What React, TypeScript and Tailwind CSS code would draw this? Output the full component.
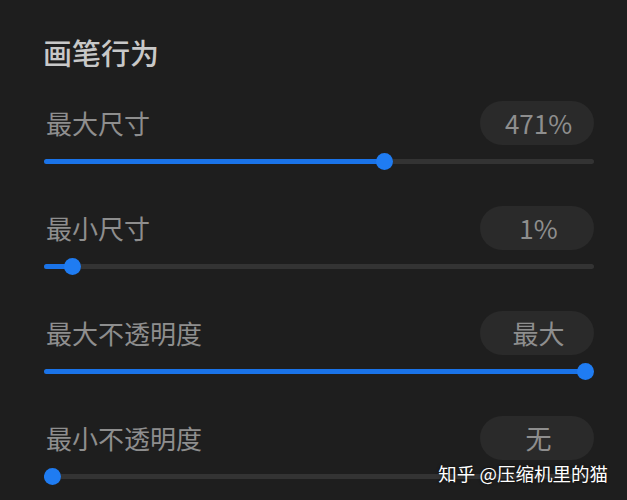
import React from 'react';

interface SliderRow {
  label: string;
  value: string;
  pct: number;
}

const rows: SliderRow[] = [
  { label: '最大尺寸', value: '471%', pct: 62.2 },
  { label: '最小尺寸', value: '1%', pct: 3.8 },
  { label: '最大不透明度', value: '最大', pct: 100 },
  { label: '最小不透明度', value: '无', pct: 0 },
];

const Slider = ({ pct }: { pct: number }) => (
  <div className="relative h-[17px] flex items-center">
    <div className="w-full h-[5px] bg-[#333333] rounded-full relative">
      {/* fill runs to the knob centre */}
      <div
        className="absolute left-0 top-0 h-full bg-[#1a73e8] rounded-full"
        style={{ width: `calc(8.5px + (100% - 17px) * ${pct / 100})` }}
      />
    </div>
    <div
      className="absolute top-0 h-[17px] w-[17px] rounded-full bg-[#1f7cf2]"
      style={{ left: `calc((100% - 17px) * ${pct / 100})` }}
    />
  </div>
);

const App: React.FC = () => {
  return (
    <div
      className="relative w-full h-[500px] overflow-hidden bg-[#1e1e1e] pl-[44px] pr-[33px] pt-[32px]"
      style={{ fontFamily: '"Noto Sans CJK SC", "Noto Sans", sans-serif' }}
    >
      <h2 className="text-[29px] leading-[40px] font-medium text-[#c8c8c8] -ml-[1px] mb-[29px]">画笔行为</h2>

      <div className="flex flex-col">
        {rows.map((r, i) => (
          <div key={i} className="flex flex-col pb-[36px]">
            <div className="flex items-center justify-between h-[44px]">
              <span className="text-[26px] leading-none text-[#8e8e8e] ml-[2px]">{r.label}</span>
              <div className="h-[44px] w-[114px] rounded-full bg-[#2a2a2a] flex items-center justify-center pl-[3px] text-[26px] leading-none text-[#8e8e8e]">
                {r.value}
              </div>
            </div>
            <div className="mt-[8px]">
              <Slider pct={r.pct} />
            </div>
          </div>
        ))}
      </div>

      {/* watermark */}
      <div className="absolute right-[19px] bottom-[18px] text-[18.5px] leading-none text-white [text-shadow:0_0_3px_rgba(0,0,0,0.8)] whitespace-nowrap">
        知乎 @压缩机里的猫
      </div>
    </div>
  );
};

export default App;
